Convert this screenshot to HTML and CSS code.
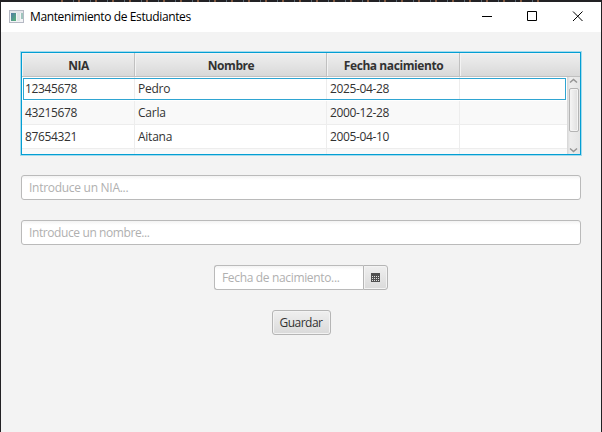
FILE: index.html
```
<!DOCTYPE html>
<html lang="es">
<head>
<meta charset="utf-8">
<title>Mantenimiento de Estudiantes</title>
<link rel="stylesheet" href="styles.css">
</head>
<body>
<div class="backdrop"></div>
<main class="window">
  <header class="titlebar">
    <svg class="app-icon" width="15" height="13" viewBox="0 0 15 13">
      <defs><linearGradient id="pane" x1="0" y1="0" x2="1" y2="1"><stop stop-color="#5279a5"/><stop offset="1" stop-color="#57b478"/></linearGradient></defs>
      <path fill="#b5b9c4" d="M0 0h15v13H0z"/><path fill="#e4e5ea" d="M1 1h13v2H1z"/><path fill="#f3f4f6" d="M1 3h13v9H1z"/>
      <path fill="url(#pane)" d="M2 3h5v8H2z"/><path fill="#e1e5e7" d="M8 3h3v8H8z"/><path fill="#9fc5bd" d="M12 3h2v6h-2z"/>
    </svg>
    <h1>Mantenimiento de Estudiantes</h1>
    <svg class="controls" width="102" height="12" viewBox="0 0 102 12" fill="none" stroke="#000">
      <path d="M0 5.500h10M45.500 .5h9v9h-9z"/><path d="M91 .5l9.500 9.500M100.500 .5L91 10"/>
    </svg>
  </header>
  <section class="content">
    <div class="table">
      <div class="row head"><div>NIA</div><div>Nombre</div><div>Fecha nacimiento</div><div></div></div>
      <div class="body">
        <div class="rows">
          <div class="row selected"><div class="num">12345678</div><div>Pedro</div><div class="num">2025-04-28</div><div></div></div>
          <div class="row alt"><div class="num">43215678</div><div>Carla</div><div class="num">2000-12-28</div><div></div></div>
          <div class="row"><div class="num">87654321</div><div>Aitana</div><div class="num">2005-04-10</div><div></div></div>
          <div class="row alt"><div></div><div></div><div></div><div></div></div>
        </div>
        <div class="scrollbar">
          <svg width="9" height="6" viewBox="0 0 9 6"><path d="M1 4.500l3.500-3 3.500 3" fill="none" stroke="#949494" stroke-width="1.500"/></svg>
          <div class="thumb"></div>
          <svg width="9" height="6" viewBox="0 0 9 6"><path d="M1 1.500l3.500 3 3.500-3" fill="none" stroke="#949494" stroke-width="1.500"/></svg>
        </div>
      </div>
    </div>
    <div class="field"><span class="nia">Introduce un NIA...</span></div>
    <div class="field"><span class="name">Introduce un nombre...</span></div>
    <div class="picker">
      <div class="field"><span class="date">Fecha de nacimiento...</span></div>
      <div class="calendar"><svg width="9" height="9" viewBox="0 0 9 9" shape-rendering="crispEdges"><path fill="#505050" d="M0 0h9v9H0z"/><path stroke="#dedede" stroke-dasharray="1 1" d="M1 3.500h7M1 5.500h7M1 7.500h7"/></svg></div>
    </div>
    <button class="save">Guardar</button>
  </section>
</main>
</body>
</html>
```
FILE: styles.css
```
*, *::after { box-sizing: border-box; }
body {
  margin: 0; width: 602px; height: 432px; overflow: hidden;
  background: #222124; color: #323232;
  font: 12px/18px "Open Sans", "Noto Sans", sans-serif;
}
.backdrop {
  height: 2px;
  background:
    linear-gradient(90deg, #222124 60px, transparent 60px 540px, #222124 540px),
    repeating-linear-gradient(90deg, #222124 0 5px, #596873 5px 6px, #222124 6px 10px, #81583f 10px 12px, #222124 12px 17px);
}
.window { margin: 0 1px; height: 430px; background: #f3f3f3; }
.titlebar { display: flex; align-items: center; height: 30px; padding-left: 8px; background: #fff; color: #000; }
.app-icon { margin-top: -1px; }
h1 { margin: 0 0 0 6px; font-size: 12px; font-weight: 400; letter-spacing: -.38px; white-space: nowrap; }
.controls { margin: 0 17px 0 auto; }
.content { display: flex; flex-direction: column; align-items: center; gap: 20px; padding: 20px; }
.table {
  width: 560px; height: 103px; border: 1px solid #039ed3;
  box-shadow: 0 0 0 1px #a4dbed; background: #fff; overflow: hidden;
}
.row { display: grid; grid-template-columns: 113px 192px 133px 1fr; height: 24px; border-bottom: 1px solid #ededed; }
.row > div { border-right: 1px solid #ededed; padding: 3px 0 0 3px; line-height: 18px; white-space: nowrap; letter-spacing: -.25px; }
.row > div:last-child { border-right: 0; }
.row > .num { letter-spacing: -.36px; }
.head { background: linear-gradient(#efefef, #d9d9d9); border-bottom-color: #c0c0c0; box-shadow: inset 0 1px #f7f7f7; }
.row.head > div { border-right-color: #c0c0c0; box-shadow: inset 1px 1px #f3f3f3; padding: 4px 0 0 1px; text-align: center; font-weight: 700; letter-spacing: -.42px; }
.body { display: flex; height: 77px; }
.rows { width: 545px; }
.alt { background: #f9f9f9; }
.selected { position: relative; border-bottom-color: #fff; }
.selected::after { content: ""; position: absolute; left: 1px; top: 1px; width: 543px; height: 22px; border: 1px solid #2fa5d2; }
.scrollbar { display: flex; flex-direction: column; align-items: center; width: 13px; padding-top: 1px; background: linear-gradient(90deg, #d5d5d5, #ededed 3px, #e5e5e5); }
.scrollbar svg { flex: none; }
.thumb { width: 10px; height: 44px; margin: 4px 0 15px; border: 1px solid #b4b4b4; border-radius: 2px; background: linear-gradient(90deg, #f5f5f5, #dedede); box-shadow: inset 0 0 0 1px #f3f3f3; }
.field {
  width: 560px; height: 25px; padding: 3px 7px; border: 1px solid #bababa; border-radius: 3px;
  background: linear-gradient(#f3f3f3, #fff 4px); color: #b0b0b0; white-space: nowrap;
}
.nia { letter-spacing: -.28px; }
.name { letter-spacing: -.4px; }
.date { letter-spacing: -.34px; }
.picker { display: flex; width: 174px; }
.picker .field { width: 149px; border-right: 0; border-radius: 3px 0 0 3px; }
.calendar, .save { border: 1px solid #b5b5b5; background: linear-gradient(#efefef, #dadada); box-shadow: inset 0 0 0 1px #f3f3f3; }
.calendar { display: flex; align-items: center; justify-content: center; width: 25px; border-radius: 0 3px 3px 0; }
.save { width: 59px; height: 25px; padding: 0; border-radius: 3px; color: #323232; font: inherit; letter-spacing: -.5px; }
```
